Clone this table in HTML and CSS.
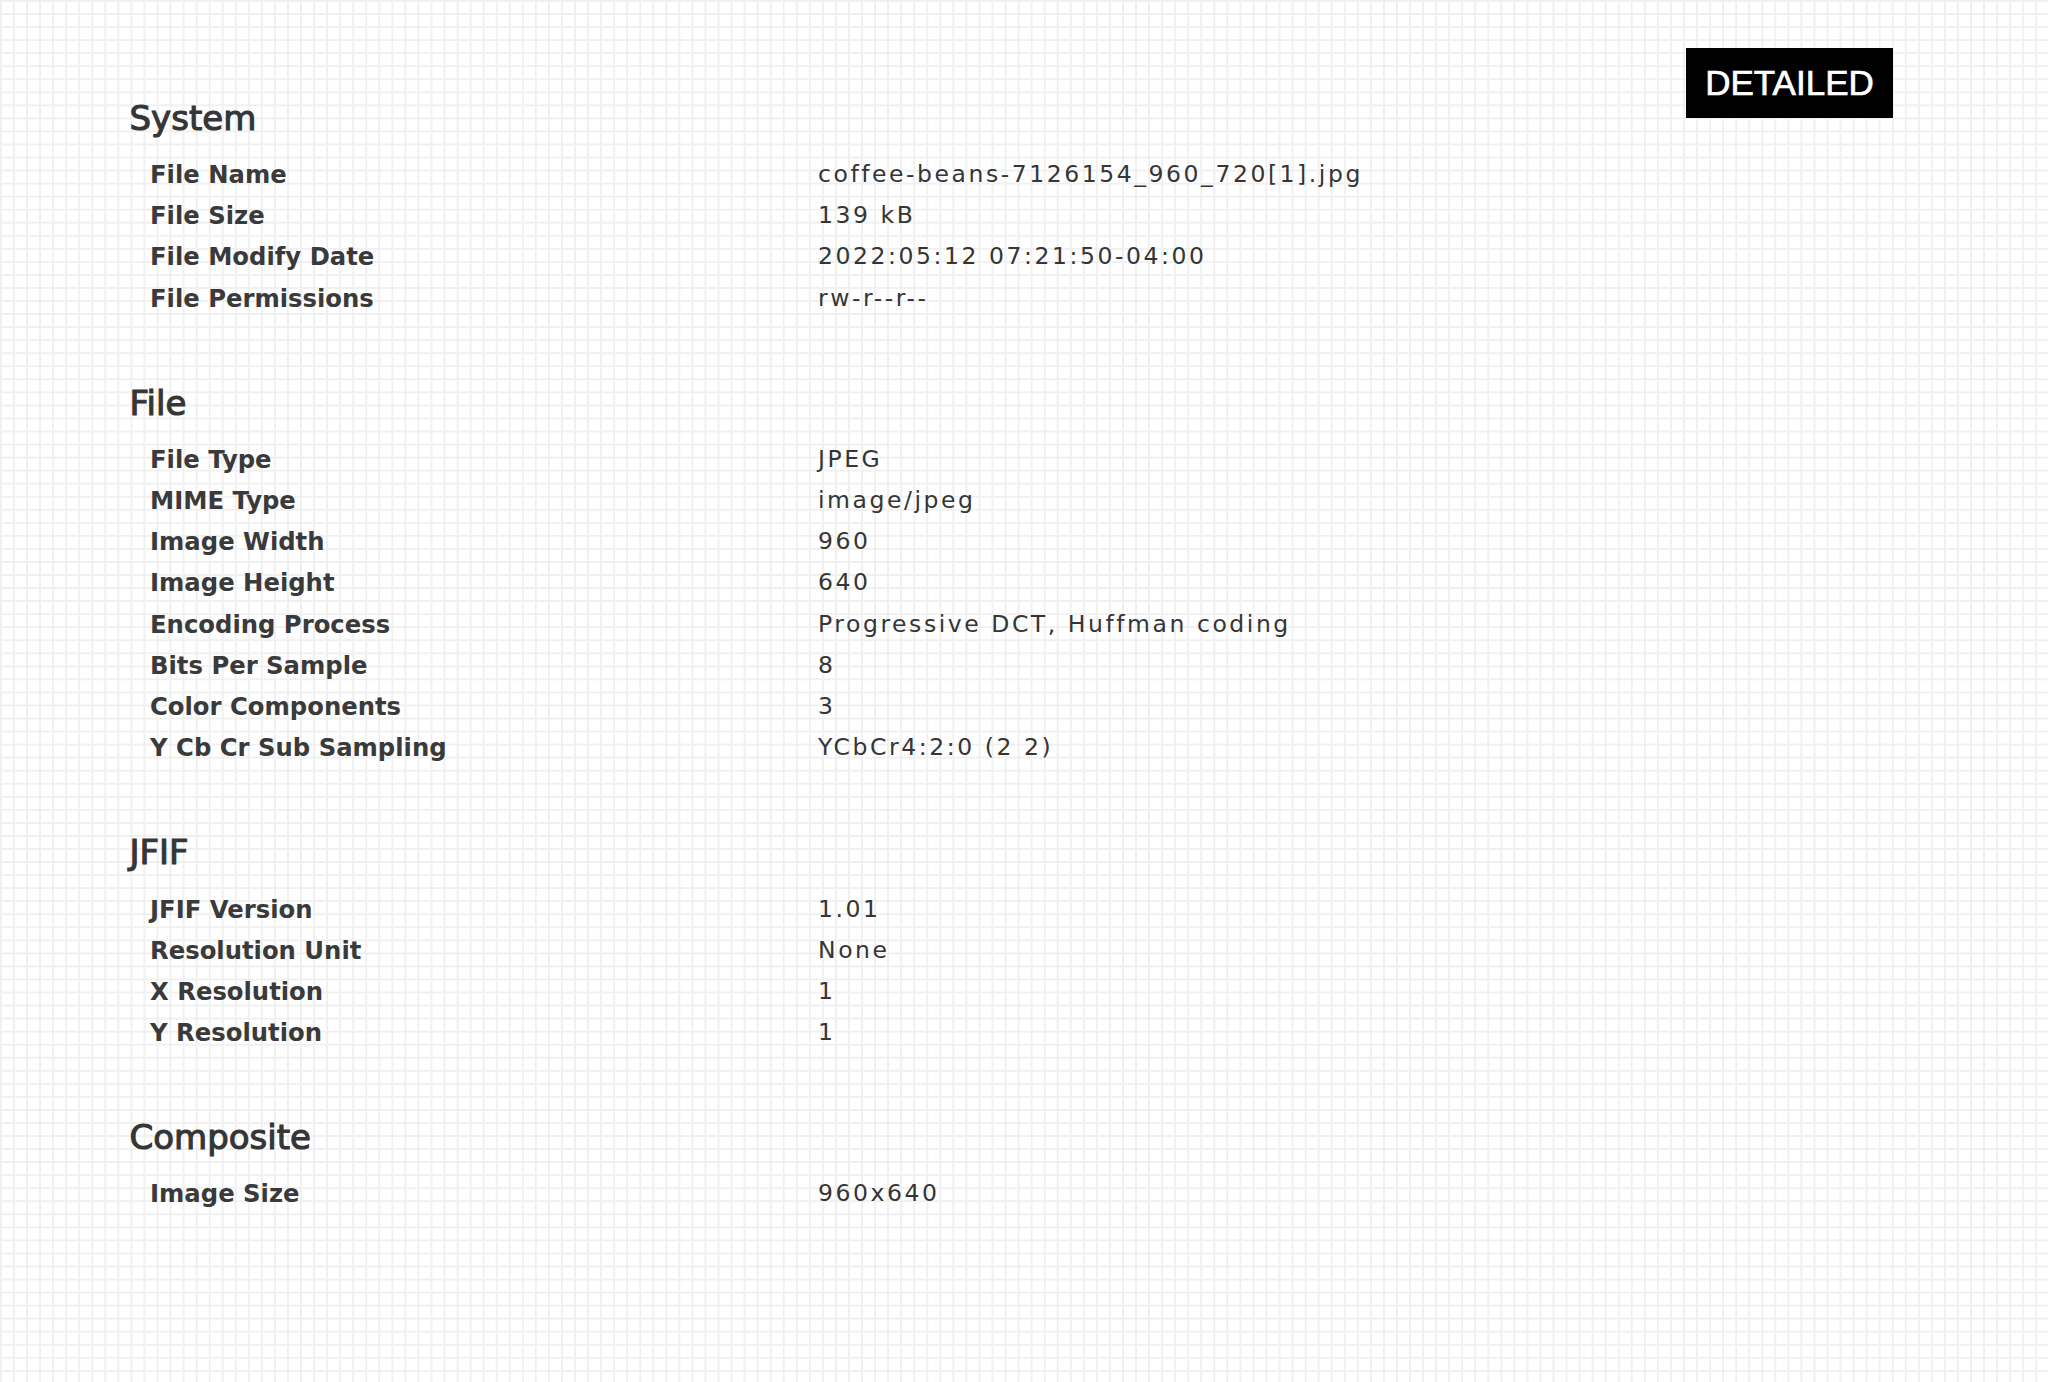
FILE: index.html
```html
<!DOCTYPE html>
<html lang="en">
<head>
<meta charset="utf-8">
<title>Metadata</title>
<link rel="stylesheet" href="styles.css">
</head>
<body>
<div class="page">
  <main class="meta">
    <section class="group">
      <h2 class="group-title">System</h2>
      <dl class="rows">
        <div class="row"><dt>File Name</dt><dd>coffee-beans-7126154_960_720[1].jpg</dd></div>
        <div class="row"><dt>File Size</dt><dd>139 kB</dd></div>
        <div class="row"><dt>File Modify Date</dt><dd>2022:05:12 07:21:50-04:00</dd></div>
        <div class="row"><dt>File Permissions</dt><dd>rw-r--r--</dd></div>
      </dl>
    </section>
    <section class="group">
      <h2 class="group-title">File</h2>
      <dl class="rows">
        <div class="row"><dt>File Type</dt><dd>JPEG</dd></div>
        <div class="row"><dt>MIME Type</dt><dd>image/jpeg</dd></div>
        <div class="row"><dt>Image Width</dt><dd>960</dd></div>
        <div class="row"><dt>Image Height</dt><dd>640</dd></div>
        <div class="row"><dt>Encoding Process</dt><dd>Progressive DCT, Huffman coding</dd></div>
        <div class="row"><dt>Bits Per Sample</dt><dd>8</dd></div>
        <div class="row"><dt>Color Components</dt><dd>3</dd></div>
        <div class="row"><dt>Y Cb Cr Sub Sampling</dt><dd>YCbCr4:2:0 (2 2)</dd></div>
      </dl>
    </section>
    <section class="group">
      <h2 class="group-title">JFIF</h2>
      <dl class="rows">
        <div class="row"><dt>JFIF Version</dt><dd>1.01</dd></div>
        <div class="row"><dt>Resolution Unit</dt><dd>None</dd></div>
        <div class="row"><dt>X Resolution</dt><dd>1</dd></div>
        <div class="row"><dt>Y Resolution</dt><dd>1</dd></div>
      </dl>
    </section>
    <section class="group">
      <h2 class="group-title">Composite</h2>
      <dl class="rows">
        <div class="row"><dt>Image Size</dt><dd>960x640</dd></div>
      </dl>
    </section>
  </main>
  <aside class="actions">
    <button class="mode-btn" type="button">DETAILED</button>
  </aside>
</div>
</body>
</html>
```
FILE: styles.css
```css
html, body {
  margin: 0;
  padding: 0;
}
body {
  min-height: 1382px;
  background-color: #ffffff;
  background-image:
    linear-gradient(to right, #f0f0f0 0, #f0f0f0 2px, transparent 2px),
    linear-gradient(to bottom, #f0f0f0 0, #f0f0f0 2px, transparent 2px);
  background-size: 13.06px 13.06px;
  background-position: 0 0;
  color: #353535;
}
.page {
  display: flex;
  justify-content: space-between;
  align-items: flex-start;
}
.meta {
  padding: 96.2px 0 0 129.5px;
  display: flex;
  flex-direction: column;
  gap: 62.6px;
}
.group-title {
  margin: 0 0 14.2px 0;
  font-family: "DejaVu Sans", sans-serif;
  font-size: 34px;
  font-weight: 400;
  -webkit-text-stroke: 1.1px #353535;
  line-height: 44px;
  color: #353535;
}
.rows {
  margin: 0;
  padding: 0 0 0 20.5px;
}
.row {
  display: grid;
  grid-template-columns: 668px 1fr;
  height: 41.05px;
  align-items: center;
}
.row dt {
  font-family: "DejaVu Sans", sans-serif;
  font-weight: 700;
  font-size: 24.3px;
  line-height: 41.05px;
  color: #3a3a3a;
}
.row dd {
  margin: 0;
  font-family: "DejaVu Sans", sans-serif;
  font-size: 23.5px;
  letter-spacing: 2.55px;
  line-height: 41.05px;
  color: #353535;
  white-space: nowrap;
}
.actions {
  padding: 48px 155px 0 0;
}
.mode-btn {
  display: flex;
  align-items: center;
  justify-content: center;
  width: 207px;
  height: 70px;
  margin: 0;
  padding: 0;
  border: none;
  background: #000000;
  color: #ffffff;
  font-family: "Liberation Sans", Arial, sans-serif;
  font-size: 35px;
  font-weight: 400;
  -webkit-text-stroke: 0.7px #ffffff;
  letter-spacing: 0;
  cursor: pointer;
}
```
